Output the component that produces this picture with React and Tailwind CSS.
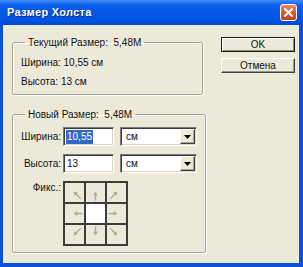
import React from "react";

const cells = [
  [-1, -1], [0, -1], [1, -1],
  [-1, 0], null, [1, 0],
  [-1, 1], [0, 1], [1, 1],
];

// small outward arrow inside an anchor cell
const Arrow = ({ dx, dy }) => {
  const len = Math.hypot(dx, dy);
  const ux = dx / len;
  const uy = dy / len;
  const c = 9.5;
  const diag = dx !== 0 && dy !== 0;
  const hx = c + ux * (diag ? 1.5 : 1);
  const hy = c + uy * (diag ? 1.5 : 1);
  const tx = c - ux * (diag ? 9 : 8);
  const ty = c - uy * (diag ? 9 : 8);
  const bx = hx - ux * 4;
  const by = hy - uy * 4;
  const px = -uy;
  const py = ux;
  const pts = `${hx},${hy} ${bx + px * 2.2},${by + py * 2.2} ${bx - px * 2.2},${by - py * 2.2}`;
  return (
    <svg width="19" height="19" viewBox="0 0 19 19">
      <line x1={tx} y1={ty} x2={bx} y2={by} stroke="#a9a796" strokeWidth="1.3" />
      <polygon points={pts} fill="#a9a796" />
    </svg>
  );
};

const sunken =
  "border border-t-[#7a7a7a] border-l-[#7a7a7a] border-b-white border-r-white shadow-[inset_1px_1px_0_#3c3c3c,inset_-1px_-1px_0_#d8d4c8]";

const Select = () => (
  <div className={`w-[77px] h-[19px] bg-white flex items-center justify-between ${sunken}`}>
    <span className="pl-[5px] text-[10px]">см</span>
    <div className="w-[15px] h-[15px] mr-[1px] bg-[#ece9d8] flex items-center justify-center border border-t-white border-l-white border-b-[#404040] border-r-[#404040] shadow-[inset_-1px_-1px_0_#a0a0a0]">
      <svg width="7" height="4" viewBox="0 0 7 4">
        <polygon points="0,0 7,0 3.5,4" fill="#000" />
      </svg>
    </div>
  </div>
);

const groupBox =
  "border border-[#aca899] rounded-[2px] shadow-[inset_1px_1px_0_#fff,1px_1px_0_#fff] px-[8px]";

export default function App() {
  return (
    <div className="w-[303px] h-[267px] flex flex-col font-['Liberation_Sans',Arial,sans-serif] text-[10px] text-[#111]">
      {/* title bar */}
      <div className="h-[25px] flex items-center justify-between pl-[7px] pr-[6px] bg-[linear-gradient(180deg,#3d8ef7_0%,#0b5de9_22%,#0055e5_70%,#004ad8_100%)]">
        <span className="text-white font-bold text-[11px] tracking-[0.3px] [text-shadow:1px_1px_0_#0a2a8a]">
          Размер Холста
        </span>
        <div className="w-[17px] h-[17px] rounded-[3px] border border-white bg-[linear-gradient(180deg,#f08a6e_0%,#e2572f_50%,#c9401e_100%)] flex items-center justify-center">
          <svg width="9" height="9" viewBox="0 0 9 9">
            <path d="M1 1 L8 8 M8 1 L1 8" stroke="#fff" strokeWidth="2" strokeLinecap="square" />
          </svg>
        </div>
      </div>

      {/* body */}
      <div className="flex-1 flex border-l-[3px] border-r-4 border-b-4 border-[#0a52dc] bg-[#ece9d8]">
        <div className="pl-[9px] pt-[11px] flex flex-col gap-[13px]">
          <fieldset className={`${groupBox} w-[191px] pt-[4px] pb-[3px] leading-[19px]`}>
            <legend className="ml-[4px] px-[3px] leading-[13px] whitespace-pre">Текущий Размер:  5,48M</legend>
            <div>Ширина: 10,55 см</div>
            <div>Высота: 13 см</div>
          </fieldset>

          <fieldset className={`${groupBox} w-[191px] pt-[6px] pb-[6px]`}>
            <legend className="ml-[4px] px-[3px] leading-[13px] whitespace-pre">Новый Размер:  5,48M</legend>
            <div className="grid grid-cols-[40px_auto_auto] gap-x-[2px] gap-y-[8px] items-center">
              <span className="text-right">Ширина:</span>
              <div className={`w-[51px] h-[19px] bg-white flex items-center pl-[2px] ${sunken}`}>
                <span className="bg-[#316ac5] text-white px-[1px] leading-[14px]">10,55</span>
              </div>
              <div className="ml-[4px]">
                <Select />
              </div>

              <span className="text-right">Высота:</span>
              <div className={`w-[51px] h-[19px] bg-white flex items-center pl-[3px] ${sunken}`}>
                <span className="leading-[14px]">13</span>
              </div>
              <div className="ml-[4px]">
                <Select />
              </div>

              <span className="text-right self-start leading-[13px]">Фикс.:</span>
              <div className="col-span-2 grid grid-cols-3 gap-[2px] p-[2px] bg-[#3c3c3c] w-fit">
                {cells.map((d, i) => (
                  <div
                    key={i}
                    className={`w-[19px] h-[19px] ${d ? "bg-[#ece9d8]" : "bg-white"}`}
                  >
                    {d && <Arrow dx={d[0]} dy={d[1]} />}
                  </div>
                ))}
              </div>
            </div>
          </fieldset>
        </div>

        <div className="ml-[15px] pt-[12px] flex flex-col gap-[6px]">
          <div className="w-[74px] h-[15px] border border-[#1c1c1c] bg-[#ece9d8] shadow-[inset_1px_1px_0_#fff,inset_-1px_-1px_0_#8a8778] flex items-center justify-center leading-none">
            OK
          </div>
          <div className="w-[74px] h-[15px] border border-t-white border-l-white border-b-[#404040] border-r-[#404040] bg-[#ece9d8] shadow-[inset_-1px_-1px_0_#9a978a] flex items-center justify-center leading-none">
            Отмена
          </div>
        </div>
      </div>
    </div>
  );
}
